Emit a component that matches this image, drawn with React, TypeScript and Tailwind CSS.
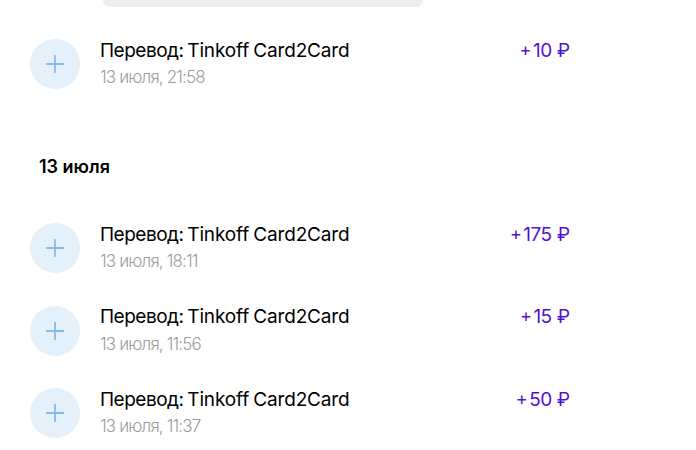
type Transfer = { time: string; amount: string };

const earlier: Transfer[] = [{ time: "21:58", amount: "10" }];

const july13: Transfer[] = [
  { time: "18:11", amount: "175" },
  { time: "11:56", amount: "15" },
  { time: "11:37", amount: "50" },
];

function Row({ item }: { item: Transfer }) {
  return (
    <div className="flex h-[50px] w-[540px]">
      <div className="flex size-[50px] shrink-0 items-center justify-center rounded-full bg-[#e4f1fb]">
        <svg className="size-[18px]" viewBox="0 0 18 18" fill="none" stroke="#84bbea" strokeWidth="1.8">
          <path d="M9 0v18M0 9h18" />
        </svg>
      </div>
      <div className="ml-5 flex flex-1 flex-col whitespace-nowrap pt-[0.8px]">
        <div className="h-[25.4px] text-[19px] leading-[22px] font-[380] tracking-[-0.15px] [word-spacing:-1px] text-black">
          <span className="tracking-[-0.5px]">Перевод: </span>Tinkoff Card2Card
        </div>
        <div className="text-[17px] leading-6 font-light tracking-[-0.85px] text-[#9c9c9c]">
          13 июля, {item.time}
        </div>
      </div>
      <div className="flex pt-[0.8px] text-[19px] leading-[22px] font-[380] tracking-[-0.5px] whitespace-nowrap text-[#5212cc]">
        <span className="mr-[2px] -mt-px text-[18px]">+</span>
        <span>{item.amount}</span>
        <span className="ml-[5px] tracking-normal">₽</span>
      </div>
    </div>
  );
}

export default function App() {
  return (
    <main className="h-[450px] w-[696px] overflow-hidden bg-white font-['Inter','Noto_Sans',sans-serif]">
      <div className="ml-[103px] h-[7px] w-[320px] rounded-b-[10px] bg-[#eeeeee]" />
      <section className="mt-8 ml-[30px]">
        {earlier.map((t) => <Row key={t.time} item={t} />)}
      </section>
      <h2 className="mt-[66px] ml-[39px] h-6 text-[18px] leading-6 font-semibold text-black">13 июля</h2>
      <section className="mt-[44px] ml-[30px] flex flex-col gap-[32.5px]">
        {july13.map((t) => <Row key={t.time} item={t} />)}
      </section>
    </main>
  );
}
